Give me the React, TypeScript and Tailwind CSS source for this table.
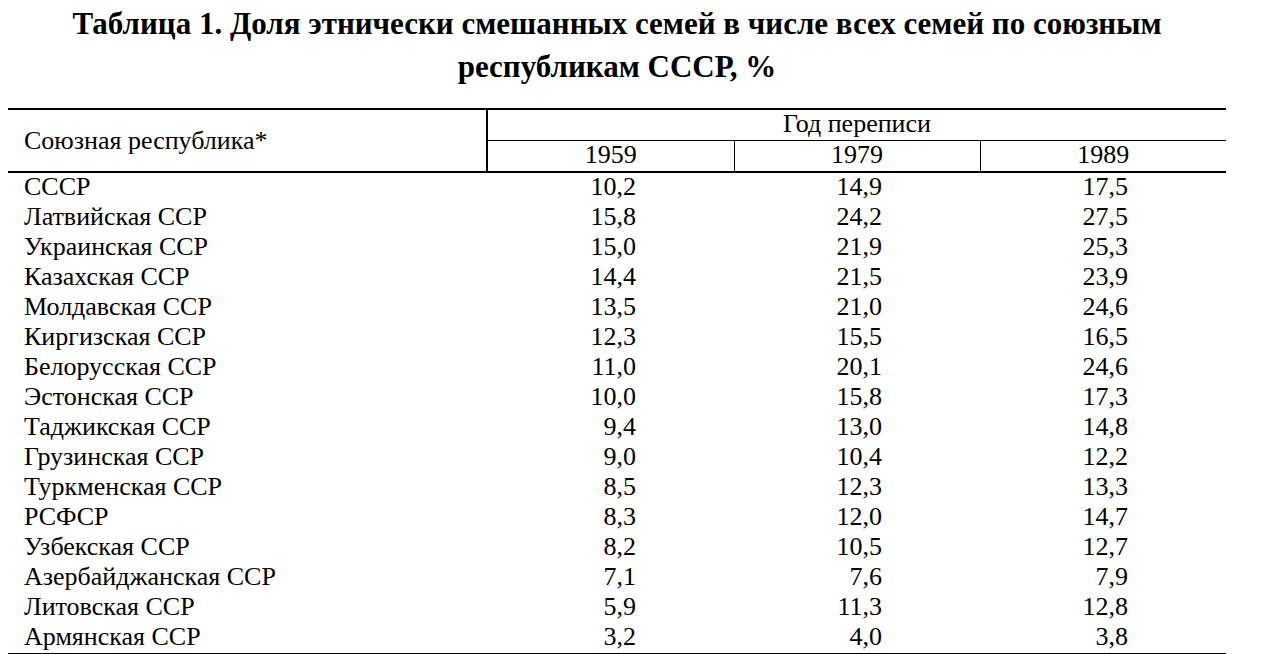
const rows: [string, string, string, string][] = [
  ['СССР', '10,2', '14,9', '17,5'],
  ['Латвийская ССР', '15,8', '24,2', '27,5'],
  ['Украинская ССР', '15,0', '21,9', '25,3'],
  ['Казахская ССР', '14,4', '21,5', '23,9'],
  ['Молдавская ССР', '13,5', '21,0', '24,6'],
  ['Киргизская ССР', '12,3', '15,5', '16,5'],
  ['Белорусская ССР', '11,0', '20,1', '24,6'],
  ['Эстонская ССР', '10,0', '15,8', '17,3'],
  ['Таджикская ССР', '9,4', '13,0', '14,8'],
  ['Грузинская ССР', '9,0', '10,4', '12,2'],
  ['Туркменская ССР', '8,5', '12,3', '13,3'],
  ['РСФСР', '8,3', '12,0', '14,7'],
  ['Узбекская ССР', '8,2', '10,5', '12,7'],
  ['Азербайджанская ССР', '7,1', '7,6', '7,9'],
  ['Литовская ССР', '5,9', '11,3', '12,8'],
  ['Армянская ССР', '3,2', '4,0', '3,8'],
];

export default function App() {
  return (
    <div className="w-[1279px] h-[654px] overflow-hidden bg-white text-black [font-family:'Liberation_Serif','Times_New_Roman',serif]">
      <div className="w-[1218px] ml-[8px]">
        <h1 className="text-center font-bold text-[31px] leading-[43px] pt-[2px]">
          Таблица 1. Доля этнически смешанных семей в числе всех семей по союзным
          <br />
          республикам СССР, %
        </h1>

        <table className="mt-[20px] w-full border-collapse text-[26px] leading-[28px]">
          <colgroup>
            <col className="w-[479px]" />
            <col className="w-[247px]" />
            <col className="w-[246px]" />
            <col className="w-[246px]" />
          </colgroup>
          <thead>
            <tr className="border-t-2 border-black">
              <th rowSpan={2} className="border-r-2 border-b-2 border-black text-left font-normal pl-[16px]">
                Союзная республика*
              </th>
              <th colSpan={3} className="border-b border-black font-normal h-[31px] pb-[2px]">
                Год переписи
              </th>
            </tr>
            <tr className="border-b-2 border-black">
              <th className="border-r border-black font-normal h-[31px] pb-[2px]">1959</th>
              <th className="border-r border-black font-normal pb-[2px]">1979</th>
              <th className="font-normal pb-[2px]">1989</th>
            </tr>
          </thead>
          <tbody className="border-b-2 border-black">
            {rows.map((r) => (
              <tr key={r[0]} className="h-[30px]">
                <td className="pl-[16px] pb-[2px]">{r[0]}</td>
                <td className="text-right pr-[98px] pb-[2px]">{r[1]}</td>
                <td className="text-right pr-[98px] pb-[2px]">{r[2]}</td>
                <td className="text-right pr-[98px] pb-[2px]">{r[3]}</td>
              </tr>
            ))}
          </tbody>
        </table>
      </div>
    </div>
  );
}
